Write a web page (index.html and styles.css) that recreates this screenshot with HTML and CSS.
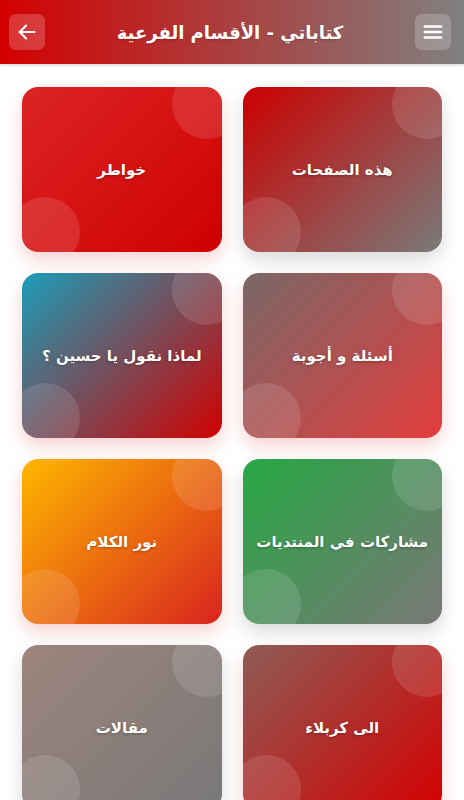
FILE: index.html
```html
<!DOCTYPE html>
<html lang="ar" dir="rtl">
<head>
    <meta charset="UTF-8">
    <meta name="viewport" content="width=device-width, initial-scale=1.0">
    <title>كتاباتي - الأقسام الفرعية</title>
    <link rel="stylesheet" href="styles.css">
</head>
<body>
    <header class="top-bar">
        <button class="bar-btn" aria-label="القائمة">
            <svg width="22" height="22" viewBox="0 0 24 24" fill="none" stroke="#fff" stroke-width="2.6" stroke-linecap="round">
                <line x1="3" y1="6" x2="21" y2="6"/>
                <line x1="3" y1="12" x2="21" y2="12"/>
                <line x1="3" y1="18" x2="21" y2="18"/>
            </svg>
        </button>
        <h1 class="page-title">كتاباتي - الأقسام الفرعية</h1>
        <button class="bar-btn back-btn" aria-label="رجوع">
            <svg width="22" height="22" viewBox="0 0 24 24" fill="none" stroke="#fff" stroke-width="2.4" stroke-linecap="round" stroke-linejoin="round">
                <line x1="20" y1="12" x2="4" y2="12"/>
                <polyline points="11,5 4,12 11,19"/>
            </svg>
        </button>
    </header>

    <main class="sections">
        <a class="section-card card-red-gray" href="#"><span>هذه الصفحات</span></a>
        <a class="section-card card-red" href="#"><span>خواطر</span></a>
        <a class="section-card card-gray-red" href="#"><span>أسئلة و أجوبة</span></a>
        <a class="section-card card-teal" href="#"><span>لماذا نقول يا حسين ؟</span></a>
        <a class="section-card card-green" href="#"><span>مشاركات في المنتديات</span></a>
        <a class="section-card card-orange" href="#"><span>نور الكلام</span></a>
        <a class="section-card card-brown-red" href="#"><span>الى كربلاء</span></a>
        <a class="section-card card-gray" href="#"><span>مقالات</span></a>
    </main>
</body>
</html>
```

FILE: styles.css
```css
body {
    margin: 0;
    font-family: "DejaVu Sans", "Noto Sans", sans-serif;
    background-color: #fff;
    color: #333;
}

/* header */
.top-bar {
    height: 64px;
    display: flex;
    align-items: center;
    justify-content: space-between;
    padding: 0 13px 0 9px;
    background: linear-gradient(to right, #d40000, #808080);
    box-shadow: 0 1px 3px rgba(0,0,0,0.2);
}
.bar-btn {
    width: 36px;
    height: 36px;
    display: flex;
    align-items: center;
    justify-content: center;
    padding: 0;
    border: none;
    border-radius: 7px;
    background-color: rgba(255,255,255,0.2);
    cursor: pointer;
}
.page-title {
    margin: 0;
    color: #fff;
    font-size: 18px;
    font-weight: bold;
    text-shadow: 0 1px 2px rgba(0,0,0,0.2);
}

/* grid of sections */
.sections {
    display: grid;
    grid-template-columns: 1fr 1fr;
    gap: 21px;
    padding: 23px 22px;
}
.section-card {
    position: relative;
    overflow: hidden;
    height: 165px;
    display: flex;
    align-items: center;
    justify-content: center;
    border-radius: 16px;
    color: #fff;
    text-decoration: none;
    font-size: 15px;
    font-weight: bold;
    text-shadow: 0 1px 3px rgba(0,0,0,0.3);
    box-shadow: 0 8px 18px rgba(210,0,0,0.18);
}
.section-card span {
    position: relative;
}
/* decorative circles */
.section-card::before,
.section-card::after {
    content: "";
    position: absolute;
    width: 70px;
    height: 70px;
    border-radius: 50%;
    background-color: rgba(255,255,255,0.12);
}
.section-card::before {
    top: -18px;
    right: -20px;
}
.section-card::after {
    bottom: -15px;
    left: -12px;
}

.card-red-gray {
    background: linear-gradient(135deg, #cc0000, #7a7a7a);
    box-shadow: 0 8px 18px rgba(0,0,0,0.15);
}
.card-red { background: linear-gradient(135deg, #dc2424, #cf0000); }
.card-gray-red { background: linear-gradient(135deg, #7a6868, #e23c3c); }
.card-teal { background: linear-gradient(135deg, #1a9db8, #d10000); }
.card-green {
    background: linear-gradient(135deg, #27a844, #7a7777);
    box-shadow: 0 8px 18px rgba(0,0,0,0.15);
}
.card-orange { background: linear-gradient(135deg, #ffb600, #d8241f); }
.card-brown-red { background: linear-gradient(135deg, #8e5c56, #d40000); }
.card-gray {
    background: linear-gradient(135deg, #9d857d, #787878);
    box-shadow: 0 8px 18px rgba(0,0,0,0.15);
}
```
